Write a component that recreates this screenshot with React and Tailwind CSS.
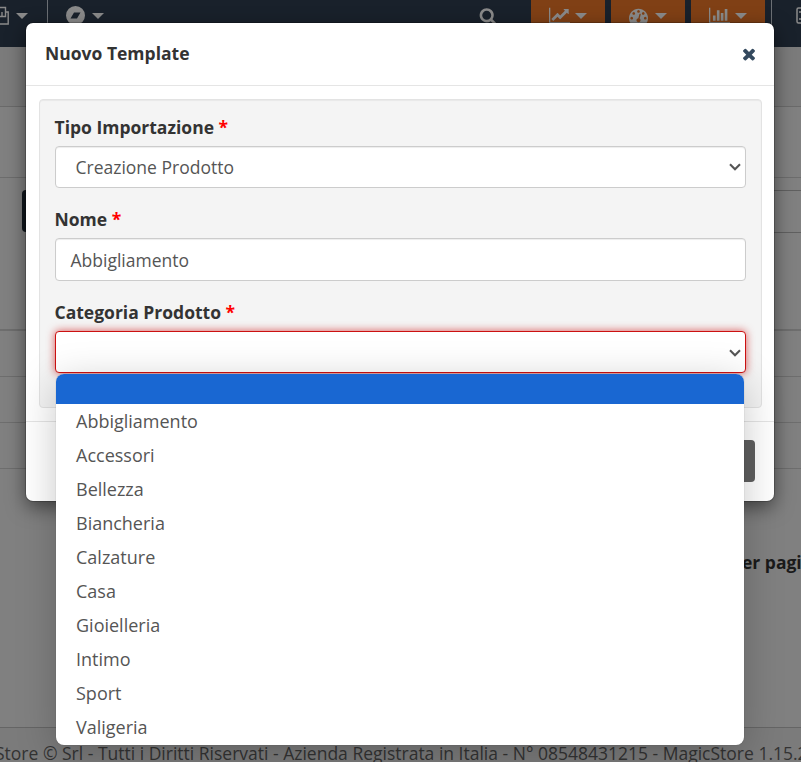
import React from "react";

const PATHS = {
  line: "M2048 1536v128h-2048v-1536h128v1408h1920zM1920 288v435q0 21-19.5 29.5t-35.5-7.5l-121-121-633 633q-10 10-23 10t-23-10l-233-233-416 416-192-192 585-585q10-10 23-10t23 10l233 233 464-464-121-121q-16-16-7.5-35.5t29.5-19.5h435q14 0 23 9t9 23z",
  bars: "M640 896v512h-256v-512h256zm384-512v1024h-256v-1024h256zm1024 1152v128h-2048v-1536h128v1408h1920zm-640-896v768h-256v-768h256zm384-384v1152h-256v-1152h256z",
  search: "M1216 832q0-185-131.5-316.5t-316.5-131.5-316.5 131.5-131.5 316.5 131.5 316.5 316.5 131.5 316.5-131.5 131.5-316.5zm512 832q0 52-38 90t-90 38q-54 0-90-38l-343-342q-179 124-399 124-143 0-273.5-55.5t-225-150-150-225-55.5-273.5 55.5-273.5 150-225 225-150 273.5-55.5 273.5 55.5 225 150 150 225 55.5 273.5q0 220-124 399l343 343q37 37 37 90z",
  times: "M1490 1322q0 40-28 68l-136 136q-28 28-68 28t-68-28l-294-294-294 294q-28 28-68 28t-68-28l-136-136q-28-28-28-68t28-68l294-294-294-294q-28-28-28-68t28-68l136-136q28-28 68-28t68 28l294 294 294-294q28-28 68-28t68 28l136 136q28 28 28 68t-28 68l-294 294 294 294q28 28 28 68z",
  gauge: "M384 1152q0-53-37.5-90.5t-90.5-37.5-90.5 37.5-37.5 90.5 37.5 90.5 90.5 37.5 90.5-37.5 37.5-90.5zm192-448q0-53-37.5-90.5t-90.5-37.5-90.5 37.5-37.5 90.5 37.5 90.5 90.5 37.5 90.5-37.5 37.5-90.5zm428 481l101-382q6-26-7.5-48.5t-38.5-29.5-48 6.5-30 39.5l-101 382q-60 5-107 43.5t-63 98.5q-20 77 20 146t117 89 146-20 89-117q16-60-6-117t-72-91zm660-33q0-53-37.5-90.5t-90.5-37.5-90.5 37.5-37.5 90.5 37.5 90.5 90.5 37.5 90.5-37.5 37.5-90.5zm-640-640q0-53-37.5-90.5t-90.5-37.5-90.5 37.5-37.5 90.5 37.5 90.5 90.5 37.5 90.5-37.5 37.5-90.5zm448 192q0-53-37.5-90.5t-90.5-37.5-90.5 37.5-37.5 90.5 37.5 90.5 90.5 37.5 90.5-37.5 37.5-90.5zm320 448q0 261-141 483-19 29-54 29h-1402q-35 0-54-29-141-221-141-483 0-182 71-348t191-286 286-191 348-71 348 71 286 191 191 286 71 348z",
};

function Icon({ name, wide, className }) {
  return (
    <svg className={className} viewBox={wide ? "0 0 2048 1792" : "0 0 1792 1792"} fill="currentColor">
      <path d={PATHS[name]} />
    </svg>
  );
}

function Caret({ className = "" }) {
  return (
    <svg className={`h-[6px] w-[12px] shrink-0 ${className}`} viewBox="0 0 12 6" fill="currentColor">
      <path d="M0 0h12L6 6z" />
    </svg>
  );
}

function NavButton({ name, wide }) {
  return (
    <div className="flex h-10 w-[74px] items-start bg-[#804015] pl-[18px]">
      <Icon name={name} wide={wide} className={wide ? "mt-[6px] h-[19px] w-[21px]" : "mt-[6px] h-[19px] w-[19px]"} />
      <Caret className={wide ? "mt-[13px] ml-[5px]" : "mt-[13px] ml-[7px]"} />
    </div>
  );
}

function Label({ children }) {
  return (
    <label className="-ml-[0.5px] block h-[27px] text-[17.5px] leading-[25px] font-bold text-[#333333]">
      {children} <span className="text-[#ff0000]">*</span>
    </label>
  );
}

function Chevron() {
  return (
    <svg className="h-[8px] w-[12px]" viewBox="0 0 12 8" fill="none" stroke="#555555" strokeWidth="2.1">
      <path d="M1 1.2l5 5 5-5" />
    </svg>
  );
}

const OPTIONS = [
  "Abbigliamento",
  "Accessori",
  "Bellezza",
  "Biancheria",
  "Calzature",
  "Casa",
  "Gioielleria",
  "Intimo",
  "Sport",
  "Valigeria",
];

function Navbar() {
  return (
    <header className="flex h-[47px] items-start bg-[#19212b] text-[#8a8a8a]">
      <svg className="mt-[6px] h-[20px] w-[10px]" viewBox="0 0 10 20" fill="none" stroke="currentColor" strokeWidth="1.4">
        <path d="M0 1.5h5.5v9H0M2 10.5V6M5.500 6h2.700v12H0" />
      </svg>
      <Caret className="mt-[13px] ml-[6px]" />
      <div className="ml-[19px] h-full w-px bg-[#6b6f74]" />
      <svg className="mt-[6px] ml-[18px] h-[19px] w-[19px]" viewBox="0 0 19 19" fill="currentColor">
        <path fillRule="evenodd" d="M9.500 0a9.500 9.500 0 1 0 0 19 9.500 9.500 0 0 0 0-19zM8 6.500h6.500L11 12.500H4.500z" />
      </svg>
      <Caret className="mt-[13px] ml-[7px]" />
      <Icon name="search" className="mt-[7px] ml-[375px] h-[18px] w-[18px]" />
      <div className="ml-[34px] flex gap-[6px]">
        <NavButton name="line" wide />
        <NavButton name="gauge" />
        <NavButton name="bars" wide />
      </div>
      <div className="ml-[6px] h-full w-px bg-[#6b6f74]" />
      <svg className="mt-[7px] ml-[24px] h-[17px] w-[5px]" viewBox="0 0 5 17" fill="none" stroke="currentColor" strokeWidth="1.5">
        <path d="M5 1H2.500Q1 1 1 2.500V14.500Q1 16 2.500 16H5M3 5h2M3 12h2" />
      </svg>
    </header>
  );
}

function Page() {
  return (
    <div className="flex h-full w-full flex-col bg-[#808080]">
      <Navbar />
      <div className="h-[60px] border-b border-[#6a6a6a] bg-[#7b7b7b]" />
      <div className="h-[71px] border-b border-[#6d6d6d]" />
      <div className="flex h-[54px] items-start justify-between pt-[12px]">
        <div className="ml-[22px] h-[42px] w-[60px] rounded bg-[#10171d]" />
        <div className="h-[43px] w-[60px] border-y border-[#606060]" />
      </div>
      <div className="h-[99px] border-b-2 border-[#6e6e6e]" />
      <div className="h-[46px] border-b border-[#6e6e6e]" />
      <div className="h-[46px] border-b border-[#6e6e6e]" />
      <div className="h-[46px] border-b border-[#6e6e6e]" />
      <div className="flex h-[258px] justify-end pt-[81px]">
        <div className="w-[59px] text-[17.5px] leading-[25px] font-bold whitespace-nowrap text-[#1a1a1a]">er pagina</div>
      </div>
      <footer className="h-[35px] border-t border-[#656565] bg-[#7b7b7b] pt-[13px] text-[17.5px] leading-[25px] whitespace-nowrap text-[#333333]">
        <p className="-ml-[5px]">Store © Srl - Tutti i Diritti Riservati - Azienda Registrata in Italia - N° 08548431215 - MagicStore 1.15.2</p>
      </footer>
    </div>
  );
}

export default function App() {
  return (
    <div className="relative h-[762px] w-[801px] overflow-hidden font-['Open_Sans',sans-serif]">
      <Page />

      <section className="absolute top-[23px] left-[26px] flex h-[478px] w-[748px] flex-col rounded-[7px] bg-white shadow-[0_6px_19px_rgba(0,0,0,0.5),0_0_0_1px_rgba(0,0,0,0.2)]">
        <div className="flex h-[63px] items-center justify-between border-b border-[#e5e5e5] pr-[16.5px] pb-[2px] pl-[19px]">
          <h4 className="text-[17.5px] leading-[25px] font-bold text-[#333333]">Nuovo Template</h4>
          <Icon name="times" className="mt-[1px] h-[18px] w-[18px] text-[#34495e]" />
        </div>
        <div className="h-[335px] pt-[13px] pr-[12px] pl-[13px]">
          <div className="h-[309px] rounded-[4px] border border-[#e3e3e3] bg-[#f4f4f4] px-[15px] pt-[15px] shadow-[inset_0_1px_1px_rgba(0,0,0,0.05)]">
            <div className="h-[92px]">
              <Label>Tipo Importazione</Label>
              <div className="mt-[4px] flex h-[42px] items-center justify-between rounded-[4px] border border-[#cccccc] bg-white pr-[4px] pl-[19.5px] text-[17.5px] text-[#555555] shadow-[inset_0_1px_1px_rgba(0,0,0,0.075)]">
                <span>Creazione Prodotto</span>
                <Chevron />
              </div>
            </div>
            <div className="h-[93px]">
              <Label>Nome</Label>
              <div className="mt-[4px] flex h-[43px] items-center rounded-[4px] border border-[#cccccc] bg-white pt-[1px] pl-[14.5px] text-[17.5px] text-[#555555] shadow-[inset_0_1px_1px_rgba(0,0,0,0.075)]">
                Abbigliamento
              </div>
            </div>
            <Label>Categoria Prodotto</Label>
            <div className="mt-[4px] flex h-[42px] items-center justify-end rounded-[4px] border border-[#cc1111] bg-white pt-[1px] pr-[4px] shadow-[0_0_8px_rgba(204,17,17,0.7)]">
              <Chevron />
            </div>
          </div>
        </div>
        <div className="flex flex-1 items-start justify-end border-t border-[#e5e5e5] pt-[18px] pr-[19px]">
          <div className="h-[42px] w-[90px] rounded-[4px] bg-[#606060]" />
        </div>
      </section>

      <div className="absolute top-[374px] left-[56px] h-[371px] w-[688px] rounded-[8px] shadow-[0_8px_40px_rgba(0,0,0,0.22),0_0_1px_rgba(0,0,0,0.4)]">
        <ul className="h-full w-full overflow-hidden rounded-[8px] bg-white text-[18px] text-[#555555]">
          <li className="h-[30px] bg-[#1967d2]" />
          {OPTIONS.map((o) => (
            <li key={o} className="flex h-[34px] items-center pl-[20px]">{o}</li>
          ))}
        </ul>
      </div>
    </div>
  );
}
